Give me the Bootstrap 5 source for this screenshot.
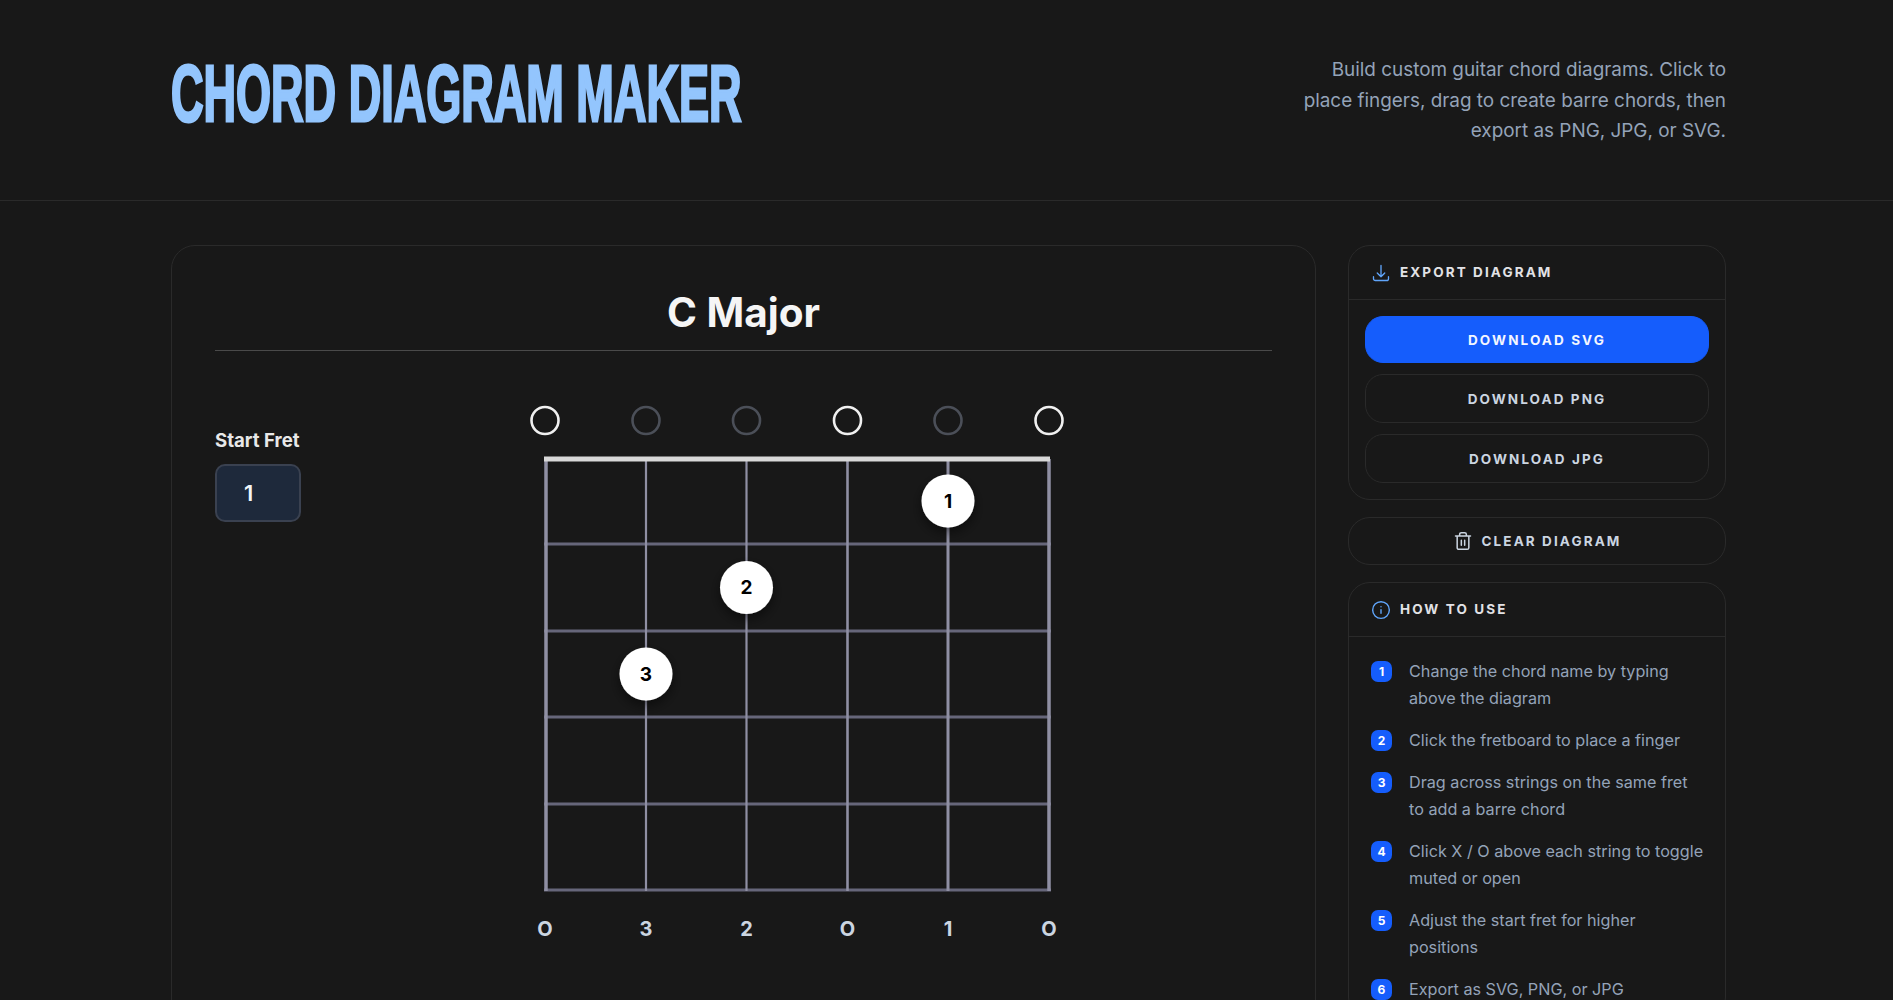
<!DOCTYPE html>
<html lang="en">
<head>
<meta charset="utf-8">
<title>Chord Diagram Maker</title>
<link href="https://cdn.jsdelivr.net/npm/bootstrap@5.3.0/dist/css/bootstrap.min.css" rel="stylesheet">
<style>
html,body{background:#181818;color:#e5e7eb;font-family:Inter,"Noto Sans",sans-serif;}
.page-head{height:201px;border-bottom:1px solid #2a2a2a;}
.wrap{width:1555px;margin-left:171px;}
.big-title{flex:none;font-family:"Liberation Sans",Arial,sans-serif;font-weight:700;font-size:80px;line-height:1;color:#93c5fd;margin:0 0 12px;transform-origin:left center;transform:scale(.563,1);-webkit-text-stroke:3px #93c5fd;white-space:nowrap;}
.sub-text{width:430px;flex:none;text-align:right;color:#94a3b8;font-size:18.9px;line-height:30.5px;margin:2px 0 0;}
.main-area{padding-top:44px;gap:32px;align-items:flex-start;}
.editor-card{width:1145px;flex:none;height:900px;background:#181818;border:1px solid #2a2a2a;border-radius:24px;padding:43px;}
.chord-name{font-size:40.5px;font-weight:700;line-height:48px;color:#f5f5f5;text-align:center;padding-bottom:13px;border-bottom:1px solid #4a4a4a;margin:0;}
.fret-ctl{width:100px;flex:none;padding-top:76px;}
.fret-label{font-size:18.6px;font-weight:700;color:#e8e8e8;line-height:26px;margin-bottom:11px;display:block;}
.fret-input{width:86px;height:58px;background:#1e293b;border:2px solid #3a4150;border-radius:10px;color:#f1f5f9;font-size:22px;font-weight:600;padding:0 0 0 27px;display:flex;align-items:center;}
.fret-svg{display:block;margin-left:216px;margin-top:55px;overflow:visible;}
.fret-svg text{font-family:Inter,sans-serif;}
.side-col{width:378px;flex:none;gap:17px;}
.side-card{background:#181818;border:1px solid #2a2a2a;border-radius:22px;overflow:hidden;}
.side-head{display:flex;align-items:center;gap:9px;height:54px;padding:0 0 0 22px;border-bottom:1px solid #2a2a2a;font-size:13.5px;font-weight:700;letter-spacing:2.1px;color:#e2e2e6;text-transform:uppercase;background:transparent;}
.side-body{padding:16px;gap:11px;}
.dl-btn{display:block;width:100%;height:49px;padding-top:8px;padding-bottom:6px;border:1px solid #2a2a2a;border-radius:18px;background:transparent;color:#cbd5e1;font-size:13.5px;font-weight:700;letter-spacing:2.1px;text-transform:uppercase;}
.dl-btn.is-main{background:#155dfc;border-color:#155dfc;color:#f3f6ff;height:47px;}
.clear-btn{height:48px;padding-top:6px;border-radius:22px;display:flex;align-items:center;justify-content:center;gap:9px;}
.how-list{padding:21px 19.5px 0 22px;margin:0;list-style:none;}
.how-list li{display:flex;gap:17px;font-size:16.2px;line-height:27px;color:#94a3b8;margin-bottom:15px;}
.num-chip{flex:none;width:21px;height:21px;margin-top:3px;border-radius:7px;background:#155dfc;color:#fff;font-size:12px;font-weight:700;line-height:21px;text-align:center;}
</style>
</head>
<body>
<header class="page-head d-flex align-items-center">
  <div class="wrap d-flex justify-content-between align-items-center">
    <h1 class="big-title">CHORD DIAGRAM MAKER</h1>
    <p class="sub-text">Build custom guitar chord diagrams. Click to place fingers, drag to create barre chords, then export as PNG, JPG, or SVG.</p>
  </div>
</header>
<main class="wrap d-flex main-area">
  <section class="editor-card">
    <h2 class="chord-name">C Major</h2>
    <div class="d-flex">
      <div class="fret-ctl">
        <label class="fret-label">Start Fret</label>
        <div class="fret-input">1</div>
      </div>
      <svg class="fret-svg" width="560" height="540" viewBox="0 0 560 540" role="img" aria-label="C major chord diagram">
        <g>
          <g fill="none" stroke-width="2.6">
            <circle cx="14" cy="14.5" r="13.5" stroke="#f0f0f0"/>
            <circle cx="115" cy="14.5" r="13.5" stroke="#4b4f58"/>
            <circle cx="215.5" cy="14.5" r="13.5" stroke="#4b4f58"/>
            <circle cx="316.5" cy="14.5" r="13.5" stroke="#f0f0f0"/>
            <circle cx="417" cy="14.5" r="13.5" stroke="#4b4f58"/>
            <circle cx="518" cy="14.5" r="13.5" stroke="#f0f0f0"/>
          </g>
          <g stroke="#66667a" stroke-width="3">
            <line x1="13" x2="520" y1="138" y2="138"/>
            <line x1="13" x2="520" y1="225" y2="225"/>
            <line x1="13" x2="520" y1="311" y2="311"/>
            <line x1="13" x2="520" y1="398" y2="398"/>
            <line x1="13" x2="520" y1="484" y2="484"/>
          </g>
          <g stroke="#8f8fa3">
            <line x1="15" x2="15" y1="53" y2="485" stroke-width="3.5"/>
            <line x1="115" x2="115" y1="53" y2="485" stroke-width="2.2"/>
            <line x1="215.5" x2="215.5" y1="53" y2="485" stroke-width="2.2"/>
            <line x1="316.5" x2="316.5" y1="53" y2="485" stroke-width="2.6"/>
            <line x1="417" x2="417" y1="53" y2="485" stroke-width="3"/>
            <line x1="518" x2="518" y1="53" y2="485" stroke-width="3.5"/>
          </g>
          <line x1="13" x2="519" y1="53" y2="53" stroke="#d8d8d8" stroke-width="5"/>
          <defs><filter id="sh" x="-40%" y="-40%" width="180%" height="180%"><feDropShadow dx="0" dy="5" stdDeviation="6" flood-color="#000" flood-opacity=".5"/></filter></defs>
          <g fill="#fff" filter="url(#sh)">
            <circle cx="417" cy="95" r="26.5"/>
            <circle cx="215.5" cy="181.5" r="26.5"/>
            <circle cx="115" cy="268" r="26.5"/>
          </g>
          <g fill="#000" font-size="19" font-weight="700" text-anchor="middle">
            <text x="417" y="102">1</text>
            <text x="215.5" y="188">2</text>
            <text x="115" y="275">3</text>
          </g>
          <g fill="#cbd5e1" font-size="20" font-weight="700" text-anchor="middle">
            <text x="14" y="530">O</text>
            <text x="115" y="530">3</text>
            <text x="215.5" y="530">2</text>
            <text x="316.5" y="530">O</text>
            <text x="417" y="530">1</text>
            <text x="518" y="530">O</text>
          </g>
        </g>
      </svg>
    </div>
  </section>
  <aside class="side-col d-flex flex-column">
    <div class="side-card">
      <div class="side-head">
        <svg width="20" height="20" viewBox="0 0 24 24" fill="none" stroke="#60a5fa" stroke-width="1.6" stroke-linecap="round" stroke-linejoin="round"><path d="M3 16.5v2.25A2.25 2.25 0 0 0 5.25 21h13.5A2.25 2.25 0 0 0 21 18.75V16.5M16.5 12 12 16.5m0 0L7.5 12m4.5 4.5V3"/></svg>
        Export Diagram
      </div>
      <div class="side-body d-flex flex-column">
        <button class="btn dl-btn is-main" type="button">Download SVG</button>
        <button class="btn dl-btn" type="button">Download PNG</button>
        <button class="btn dl-btn" type="button">Download JPG</button>
      </div>
    </div>
    <button class="btn dl-btn clear-btn" type="button">
      <svg width="20" height="20" viewBox="0 0 24 24" fill="none" stroke="#cbd5e1" stroke-width="1.8" stroke-linecap="round" stroke-linejoin="round"><path d="M3 6h18M19 6v14a2 2 0 0 1-2 2H7a2 2 0 0 1-2-2V6M8 6V4a2 2 0 0 1 2-2h4a2 2 0 0 1 2 2v2M10 11v6M14 11v6"/></svg>
      Clear Diagram
    </button>
    <div class="side-card">
      <div class="side-head">
        <svg width="20" height="20" viewBox="0 0 24 24" fill="none" stroke="#60a5fa" stroke-width="1.7" stroke-linecap="round"><circle cx="12" cy="12" r="10"/><path d="M12 16v-4.5M12 8h.01"/></svg>
        How to use
      </div>
      <ol class="how-list">
        <li><span class="num-chip">1</span><span>Change the chord name by typing above the diagram</span></li>
        <li><span class="num-chip">2</span><span>Click the fretboard to place a finger</span></li>
        <li><span class="num-chip">3</span><span>Drag across strings on the same fret to add a barre chord</span></li>
        <li><span class="num-chip">4</span><span>Click X / O above each string to toggle muted or open</span></li>
        <li><span class="num-chip">5</span><span>Adjust the start fret for higher positions</span></li>
        <li><span class="num-chip">6</span><span>Export as SVG, PNG, or JPG</span></li>
      </ol>
    </div>
  </aside>
</main>
<script src="https://cdn.jsdelivr.net/npm/bootstrap@5.3.0/dist/js/bootstrap.bundle.min.js"></script>
</body>
</html>
